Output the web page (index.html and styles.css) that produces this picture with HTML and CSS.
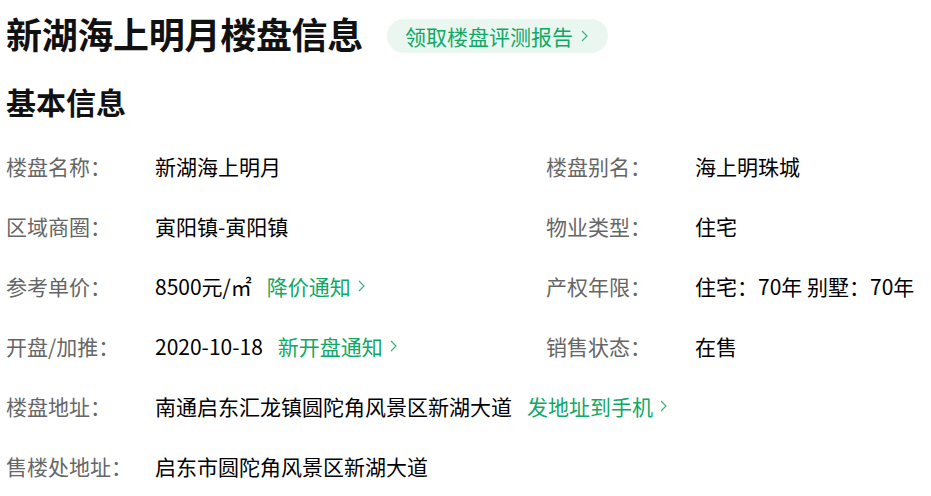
FILE: index.html
```html
<!DOCTYPE html>
<html lang="zh-CN">
<head>
<meta charset="utf-8">
<title>新湖海上明月楼盘信息</title>
<link rel="stylesheet" href="styles.css">
</head>
<body>
<div class="page">
  <div class="title-row">
    <h1 class="title">新湖海上明月楼盘信息</h1>
    <a class="report-btn" href="#">领取楼盘评测报告<svg class="chev" viewBox="0 0 7 12" width="7" height="12"><path d="M1 1 L6 6 L1 11" fill="none" stroke="currentColor" stroke-width="1.2"/></svg></a>
  </div>
  <h2 class="section">基本信息</h2>
  <div class="info-grid">
    <div class="item"><span class="label">楼盘名称：</span><span class="value">新湖海上明月</span></div>
    <div class="item"><span class="label">楼盘别名：</span><span class="value">海上明珠城</span></div>
    <div class="item"><span class="label">区域商圈：</span><span class="value">寅阳镇-寅阳镇</span></div>
    <div class="item"><span class="label">物业类型：</span><span class="value">住宅</span></div>
    <div class="item"><span class="label">参考单价：</span><span class="value">8500元/㎡</span><a class="link" href="#">降价通知<svg class="chev" viewBox="0 0 7 12" width="7" height="12"><path d="M1 1 L6 6 L1 11" fill="none" stroke="currentColor" stroke-width="1.2"/></svg></a></div>
    <div class="item"><span class="label">产权年限：</span><span class="value">住宅：70年 别墅：70年</span></div>
    <div class="item"><span class="label">开盘/加推：</span><span class="value">2020-10-18</span><a class="link" href="#">新开盘通知<svg class="chev" viewBox="0 0 7 12" width="7" height="12"><path d="M1 1 L6 6 L1 11" fill="none" stroke="currentColor" stroke-width="1.2"/></svg></a></div>
    <div class="item"><span class="label">销售状态：</span><span class="value">在售</span></div>
    <div class="item wide"><span class="label">楼盘地址：</span><span class="value">南通启东汇龙镇圆陀角风景区新湖大道</span><a class="link" href="#">发地址到手机<svg class="chev" viewBox="0 0 7 12" width="7" height="12"><path d="M1 1 L6 6 L1 11" fill="none" stroke="currentColor" stroke-width="1.2"/></svg></a></div>
    <div class="item wide"><span class="label">售楼处地址：</span><span class="value">启东市圆陀角风景区新湖大道</span></div>
  </div>
</div>
</body>
</html>
```

FILE: styles.css
```css
html, body {
  margin: 0;
  padding: 0;
  background: #fff;
}
body {
  font-family: "Noto Sans CJK SC", "Microsoft YaHei", sans-serif;
  color: #000;
}
.page {
  padding: 0 0 0 6px;
  white-space: nowrap;
}
.title-row {
  display: flex;
  align-items: center;
  height: 66px;
}
.title {
  margin: 0;
  font-size: 36px;
  line-height: 1;
  font-weight: 700;
  color: #111;
  letter-spacing: -0.3px;
}
.report-btn {
  margin-left: 24px;
  margin-top: 6px;
  display: flex;
  align-items: center;
  height: 34px;
  padding: 0 20px 0 18px;
  border-radius: 17px;
  background: #eaf7f1;
  color: #0fa865;
  font-size: 21px;
  text-decoration: none;
}
.report-btn .chev {
  margin-left: 8px;
  color: #3cb47f;
}
.section {
  margin: 20px 0 20px;
  font-size: 30px;
  line-height: 30px;
  font-weight: 700;
  color: #111;
}
.info-grid {
  display: grid;
  grid-template-columns: 540px 1fr;
  grid-auto-rows: 60px;
}
.item {
  display: flex;
  align-items: center;
  font-size: 21px;
  line-height: 60px;
}
.item.wide {
  grid-column: 1 / -1;
}
.label {
  width: 149px;
  flex: none;
  color: #666;
}
.value {
  color: #000;
}
.link {
  margin-left: 15px;
  display: flex;
  align-items: center;
  color: #0fa865;
  text-decoration: none;
}
.link .chev {
  margin-left: 7px;
  color: #3cb47f;
}
```
